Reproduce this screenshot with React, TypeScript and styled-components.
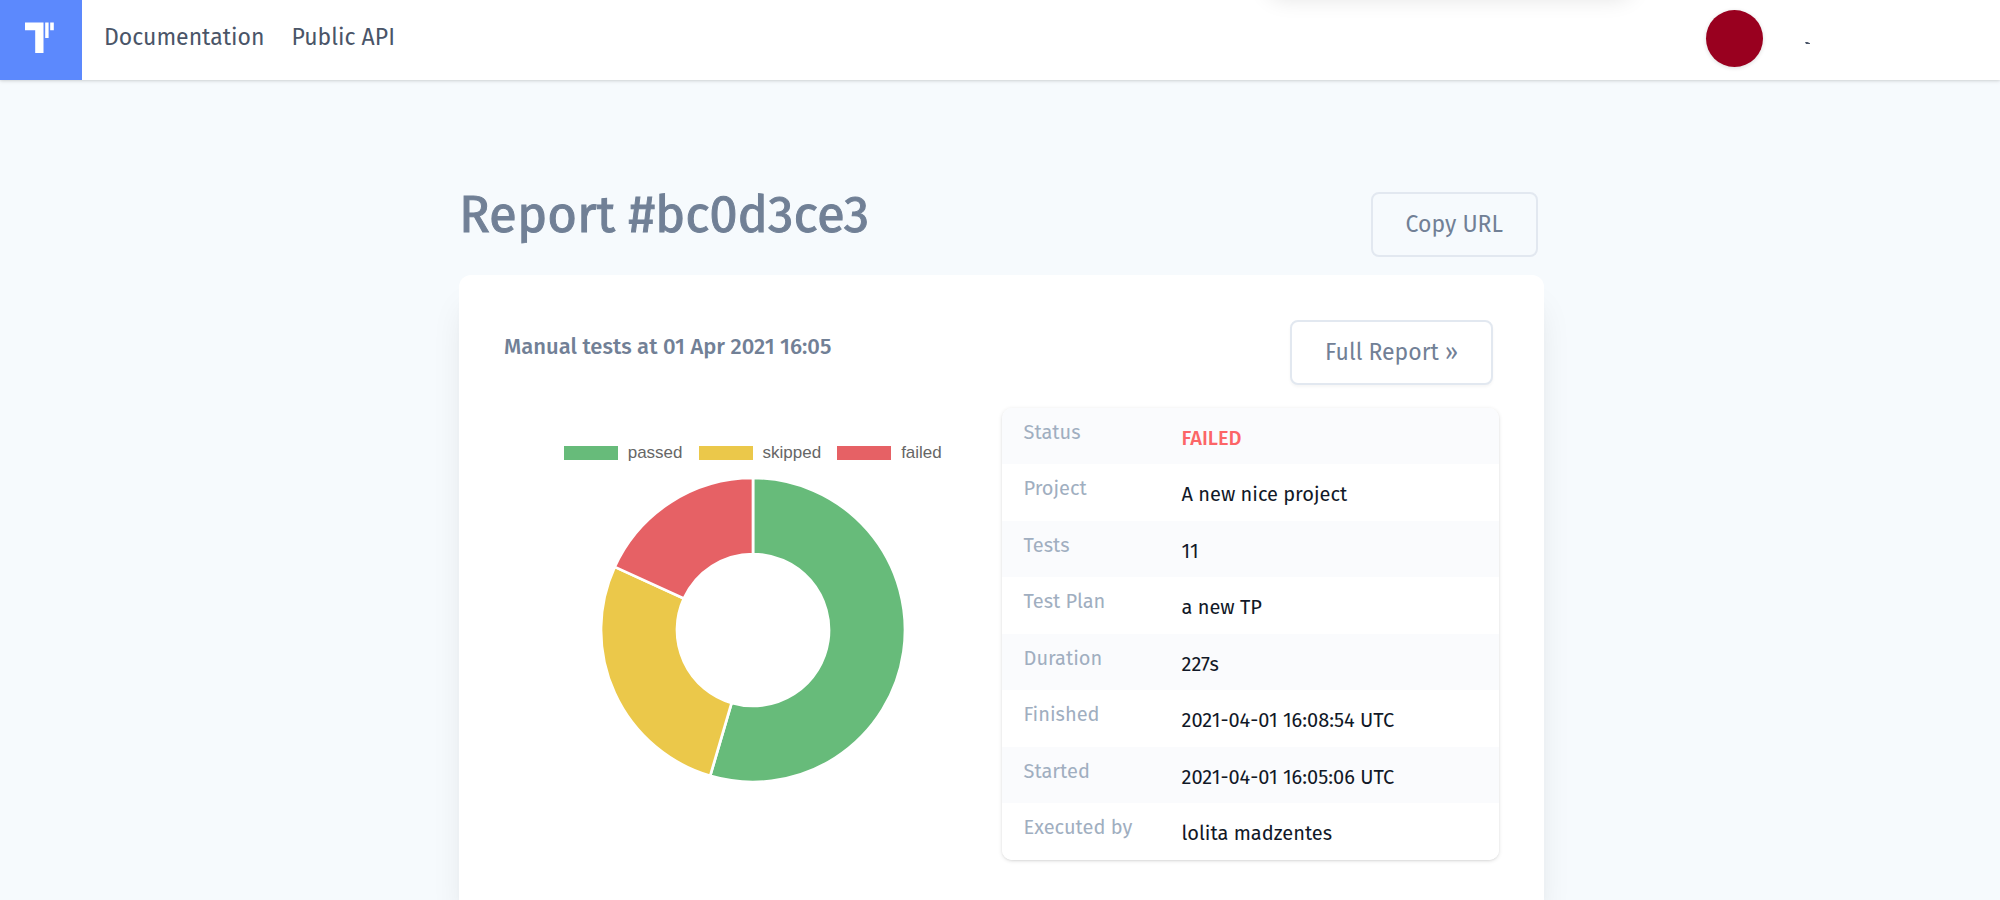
import React from "react";
import styled, { createGlobalStyle } from "styled-components";

const sans = `"Fira Sans", "Noto Sans", sans-serif`;

const GlobalStyle = createGlobalStyle`
  *, *::before, *::after { box-sizing: border-box; }
  body {
    margin: 0;
    background: #f6fafd;
    color: #111827;
    font-family: ${sans};
  }
  h1, h2, ul { margin: 0; padding: 0; }
`;

const Page = styled.div`
  display: flex;
  flex-direction: column;
  min-height: 100vh;
  overflow: hidden;
`;

const Header = styled.header`
  position: relative;
  display: flex;
  align-items: center;
  height: 80px;
  background: #fff;
  box-shadow: 0 1px 4px rgba(0, 0, 0, 0.12), 0 1px 2px rgba(0, 0, 0, 0.06);
`;

const LogoLink = styled.a`
  display: flex;
  width: 82px;
  height: 80px;
  background: #5c89fd;
`;

const Nav = styled.nav`
  display: flex;
  flex: 1;
  gap: 27px;
  padding: 0 0 6px 22px;
`;

const NavLink = styled.a`
  color: #4a5568;
  font-size: 23px;
  line-height: 32px;
  text-decoration: none;
`;

const Account = styled.button`
  display: flex;
  align-items: center;
  gap: 42px;
  width: 294px;
  height: 80px;
  padding: 0 0 4px;
  border: 0;
  background: none;
`;

const Avatar = styled.span`
  width: 57px;
  height: 57px;
  border-radius: 50%;
  background: #99001f;
  box-shadow: 0 1px 4px rgba(0, 0, 0, 0.14);
`;

const DropShade = styled.div`
  position: absolute;
  top: -40px;
  right: 370px;
  width: 360px;
  height: 32px;
  border-radius: 12px;
  box-shadow: 0 4px 24px rgba(0, 0, 0, 0.14);
`;

const Main = styled.main`
  display: flex;
  flex: 1;
  flex-direction: column;
  width: 100%;
  max-width: 1088px;
  margin: 0 auto;
  padding: 112px 0 0 3px;
`;

const TitleRow = styled.div`
  display: flex;
  align-items: flex-start;
  justify-content: space-between;
  padding: 0 6px 18px 0;
`;

const Title = styled.h1`
  color: #718096;
  font-size: 51px;
  font-weight: 400;
  line-height: 46px;
  -webkit-text-stroke: 1px currentColor;
`;

const Button = styled.button<{ $raised?: boolean }>`
  height: 65px;
  padding: 0 33px 2px;
  border: 2px solid #e2e8f0;
  border-radius: 8px;
  background: ${(p) => (p.$raised ? "#fff" : "transparent")};
  box-shadow: ${(p) => (p.$raised ? "0 2px 3px rgba(0, 0, 0, 0.04)" : "none")};
  color: #718096;
  font-family: inherit;
  font-size: 23px;
  line-height: 32px;
`;

const Card = styled.section`
  flex: 1;
  padding: 45px 45px 40px;
  border-radius: 12px 12px 0 0;
  background: #fff;
  box-shadow: 0 28px 35px -7px rgba(0, 0, 0, 0.1), 0 14px 14px -7px rgba(0, 0, 0, 0.04);
`;

const CardHead = styled.div`
  display: flex;
  justify-content: space-between;
  padding: 0 6px 23px 0;
`;

const CardTitle = styled.h2`
  color: #718096;
  font-size: 22px;
  font-weight: 500;
  line-height: 54px;
`;

const Columns = styled.div`
  display: grid;
  grid-template-columns: 1fr 1fr;
  align-items: start;
`;

const Chart = styled.div`
  display: flex;
  flex-direction: column;
  align-items: center;
  padding-top: 36px;
`;

const Legend = styled.ul`
  display: flex;
  gap: 16px;
  list-style: none;
`;

const LegendItem = styled.li<{ $color: string }>`
  display: flex;
  align-items: center;
  gap: 10px;
  color: #666;
  font: 17px/18px "Liberation Sans", sans-serif;

  &::before {
    content: "";
    width: 54px;
    height: 14px;
    background: ${(p) => p.$color};
  }
`;

const Donut = styled.svg`
  width: 304px;
  height: 304px;
  margin-top: 16px;
`;

const Details = styled.table`
  width: 100%;
  border-collapse: collapse;
  border-radius: 10px;
  overflow: hidden;
  box-shadow: 0 1px 4px rgba(0, 0, 0, 0.12), 0 1px 2px rgba(0, 0, 0, 0.06);
`;

const Row = styled.tr`
  height: 56px;
  background: #fafbfd;

  &:nth-child(even) {
    height: 57px;
    background: #fff;
  }
`;

const Label = styled.th`
  width: 158px;
  padding: 11px 0 0 22px;
  color: #a0aec0;
  font-size: 20px;
  font-weight: 400;
  line-height: 26px;
  text-align: left;
  vertical-align: top;
`;

const Value = styled.td<{ $failed?: boolean }>`
  padding: 17px 0 0 22px;
  color: ${(p) => (p.$failed ? "#fc6567" : "#111827")};
  font-size: 20px;
  font-weight: ${(p) => (p.$failed ? 500 : 400)};
  line-height: 26px;
  vertical-align: top;
`;

const results = [
  { name: "passed", count: 6, color: "#67bb7a" },
  { name: "skipped", count: 3, color: "#ebc84a" },
  { name: "failed", count: 2, color: "#e66165" },
];

const details = [
  ["Status", "FAILED"],
  ["Project", "A new nice project"],
  ["Tests", "11"],
  ["Test Plan", "a new TP"],
  ["Duration", "227s"],
  ["Finished", "2021-04-01 16:08:54 UTC"],
  ["Started", "2021-04-01 16:05:06 UTC"],
  ["Executed by", "lolita madzentes"],
];

function slices() {
  const total = results.reduce((sum, r) => sum + r.count, 0);
  const outer = 152;
  const inner = 76;
  const at = (radius: number, turn: number) => {
    const a = turn * Math.PI * 2;
    return `${152 + radius * Math.sin(a)} ${152 - radius * Math.cos(a)}`;
  };
  let done = 0;
  return results.map((r) => {
    const from = done / total;
    done += r.count;
    const to = done / total;
    const large = to - from > 0.5 ? 1 : 0;
    const d = `M${at(outer, from)} A${outer} ${outer} 0 ${large} 1 ${at(outer, to)} L${at(inner, to)} A${inner} ${inner} 0 ${large} 0 ${at(inner, from)} Z`;
    return <path key={r.name} d={d} fill={r.color} stroke="#fff" strokeWidth="2.7" />;
  });
}

export default function App() {
  return (
    <Page>
      <GlobalStyle />
      <Header>
        <LogoLink href="#" aria-label="Home">
          <svg width="82" height="80" fill="#fff" aria-hidden="true">
            <path d="M25 22.5h18.5v30.5h-8.3v-22.7H25z" />
            <path d="M45.2 22.5h3.4v15.4h-3.4zM50.2 22.5h3.6v7.8h-3.6z" />
          </svg>
        </LogoLink>
        <Nav>
          <NavLink href="#">Documentation</NavLink>
          <NavLink href="#">Public API</NavLink>
        </Nav>
        <Account type="button" aria-label="Account menu">
          <Avatar />
          <svg width="6" height="14" viewBox="0 0 6 14" aria-hidden="true">
            <path d="M0 11H2.5L5 12.2V13H1z" fill="#4a5568" />
          </svg>
        </Account>
        <DropShade />
      </Header>
      <Main>
        <TitleRow>
          <Title>Report #bc0d3ce3</Title>
          <Button type="button">Copy URL</Button>
        </TitleRow>
        <Card>
          <CardHead>
            <CardTitle>Manual tests at 01 Apr 2021 16:05</CardTitle>
            <Button type="button" $raised>
              Full Report »
            </Button>
          </CardHead>
          <Columns>
            <Chart>
              <Legend>
                {results.map((r) => (
                  <LegendItem key={r.name} $color={r.color}>
                    {r.name}
                  </LegendItem>
                ))}
              </Legend>
              <Donut viewBox="0 0 304 304" role="img" aria-label="Test results">
                {slices()}
              </Donut>
            </Chart>
            <Details>
              <tbody>
                {details.map(([label, value]) => (
                  <Row key={label}>
                    <Label scope="row">{label}</Label>
                    <Value $failed={value === "FAILED"}>{value}</Value>
                  </Row>
                ))}
              </tbody>
            </Details>
          </Columns>
        </Card>
      </Main>
    </Page>
  );
}
